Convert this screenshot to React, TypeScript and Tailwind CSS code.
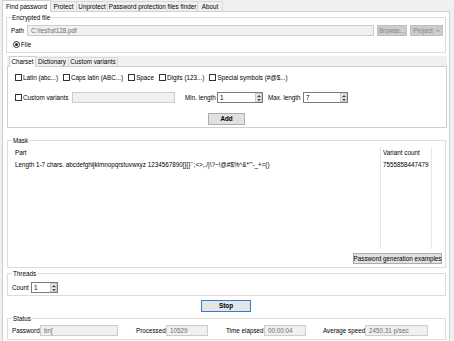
import React from "react";

function Tri({ down }: { down?: boolean }) {
  return (
    <svg width="4" height="2" viewBox="0 0 4 2">
      <polygon points={down ? "0,0 4,0 2,2" : "0,2 4,2 2,0"} fill="#404040" />
    </svg>
  );
}

function Spin({ value, w }: { value: string; w: string }) {
  return (
    <div className={`flex h-[11px] shrink-0 border border-[#7a7a7a] bg-white ${w}`}>
      <span className="flex-1 pl-[2px] leading-[9px]">{value}</span>
      <div className="flex w-[7px] flex-col border border-[#c9c9c9] bg-[#ececec]">
        <div className="flex flex-1 items-center justify-center border-b border-[#c9c9c9]">
          <Tri />
        </div>
        <div className="flex flex-1 items-center justify-center">
          <Tri down />
        </div>
      </div>
    </div>
  );
}

function Field({ value, w }: { value?: string; w: string }) {
  return (
    <div className={`relative h-[11px] shrink-0 border border-[#cccccc] bg-[#f0f0f0] pl-[3px] leading-[9px] text-[#6d6d6d] ${w}`}>
      {value}
    </div>
  );
}

function Check({ label }: { label: string }) {
  return (
    <div className="flex shrink-0 items-center gap-[1px]">
      <span className="h-[7px] w-[7px] border border-[#333333] bg-white" />
      <span className="leading-[9px]">{label}</span>
    </div>
  );
}

function Label({ text, w, className }: { text: string; w: string; className?: string }) {
  return (
    <span className={`flex shrink-0 justify-start leading-[9px] ${w} ${className ?? ""}`}>
      <span>{text}</span>
    </span>
  );
}

function Group({ legend, className, children }: { legend: string; className?: string; children: React.ReactNode }) {
  return (
    <fieldset className={`border border-[#dcdcdc] ${className ?? ""}`}>
      <legend className="ml-[4px] px-[1px] leading-[9px]">{legend}</legend>
      {children}
    </fieldset>
  );
}

function Btn({ children, w, className }: { children: React.ReactNode; w: string; className?: string }) {
  return (
    <div className={`flex shrink-0 items-center justify-center border ${w} ${className ?? ""}`}>{children}</div>
  );
}

export default function App() {
  return (
    <div className="h-[341px] w-[454px] overflow-hidden whitespace-nowrap bg-[#f0f0f0] font-['Liberation_Sans',Arial,sans-serif] text-[6.3px] text-[#000000]">
      {/* top tabs */}
      <div className="flex h-[11px] items-end pl-[2px]">
        <div className="relative z-10 -mb-[1px] flex h-[12px] w-[49px] items-center justify-center border border-b-0 border-[#cfcfcf] bg-white">
          Find password
        </div>
        <div className="flex h-[10px] w-[26px] items-center justify-center border border-b-0 border-l-0 border-[#d9d9d9] bg-[#f0f0f0]">
          Protect
        </div>
        <div className="flex h-[10px] w-[31px] items-center justify-center border border-b-0 border-l-0 border-[#d9d9d9] bg-[#f0f0f0]">
          Unprotect
        </div>
        <div className="flex h-[10px] w-[90px] items-center justify-center border border-b-0 border-l-0 border-[#d9d9d9] bg-[#f0f0f0]">
          Password protection files finder
        </div>
        <div className="flex h-[10px] w-[25px] items-center justify-center border border-b-0 border-l-0 border-[#d9d9d9] bg-[#f0f0f0]">
          About
        </div>
      </div>

      {/* tab page */}
      <div className="ml-[2px] flex h-[340px] w-[448px] flex-col border border-[#cfcfcf] bg-white">
        {/* Encrypted file */}
        <Group legend="Encrypted file" className="mt-[1px] ml-[3px] mr-[3px]">
          <div className="mt-[3px] flex items-center pl-[4px] pr-[2px]">
            <Label text="Path" w="w-[16px]" />
            <Field value="C:\test\st128.pdf" w="flex-1" />
            <Btn w="ml-[3px] h-[11px] w-[30px]" className="border-[#bfbfbf] bg-[#cccccc] text-[#838383]">
              Browse...
            </Btn>
            <Btn w="ml-[3px] h-[11px] w-[33px]" className="gap-[3px] border-[#bfbfbf] bg-[#cccccc] text-[#838383]">
              <span>Project</span>
              <svg width="4" height="2" viewBox="0 0 4 2">
                <polygon points="0,0 4,0 2,2" fill="#9a9a9a" />
              </svg>
            </Btn>
          </div>
          <div className="mt-[4px] mb-[3px] flex h-[9px] items-center gap-[1px] pl-[6px]">
            <span className="flex h-[7px] w-[7px] items-center justify-center rounded-full border border-[#333333] bg-white">
              <span className="h-[3px] w-[3px] rounded-full bg-[#222222]" />
            </span>
            <span className="leading-[9px]">File</span>
          </div>
        </Group>

        {/* sub tabs */}
        <div className="mt-[3px] ml-[4px] mr-[2px] flex flex-col">
          <div className="flex h-[10px] items-end bg-[#f0f0f0] pl-[2px]">
            <div className="relative z-10 -mb-[1px] flex h-[11px] w-[27px] items-center justify-center border border-b-0 border-[#cfcfcf] bg-white">
              Charset
            </div>
            <div className="flex h-[9px] w-[33px] items-center justify-center border border-b-0 border-l-0 border-[#d9d9d9] bg-[#f0f0f0]">
              Dictionary
            </div>
            <div className="flex h-[9px] w-[49px] items-center justify-center border border-b-0 border-l-0 border-[#d9d9d9] bg-[#f0f0f0]">
              Custom variants
            </div>
          </div>
          <div className="flex flex-col border border-[#cfcfcf] bg-white pb-[2px] pt-[6px]">
            <div className="flex h-[9px] items-center gap-[5px] pl-[7px]">
              <Check label="Latin (abc...)" />
              <Check label="Caps latin (ABC...)" />
              <Check label="Space" />
              <Check label="Digits (123...)" />
              <Check label="Special symbols (#@$...)" />
            </div>
            <div className="mt-[10px] flex h-[11px] items-center pl-[7px]">
              <div className="w-[57px] shrink-0">
                <Check label="Custom variants" />
              </div>
              <Field w="w-[103px]" />
              <Label text="Min. length" w="ml-[10px] w-[32px]" />
              <Spin value="1" w="w-[46px]" />
              <Label text="Max. length" w="ml-[5px] w-[35px]" />
              <Spin value="7" w="w-[45px]" />
            </div>
            <div className="mt-[10px] flex justify-center pr-[1px]">
              <Btn w="h-[12px] w-[37px]" className="border-[#adadad] bg-[#e1e1e1] font-semibold">
                Add
              </Btn>
            </div>
          </div>
        </div>

        {/* Mask */}
        <Group legend="Mask" className="mt-[8px] ml-[4px] mr-[3px]">
          <div className="mx-[3px] flex h-[104px] bg-white">
            <div className="min-w-0 flex-1 pl-[4px] pt-[3px]">
              <div className="leading-[9px]">Part</div>
              <div className="mt-[3px] leading-[9px]">
                {"Length 1-7 chars. abcdefghijklmnopqrstuvwxyz 1234567890[]{}'`;<>,./|\\?~!@#$%^&*'\"-_+=()"}
              </div>
            </div>
            <div className="mt-[2px] w-[52px] shrink-0 border-x border-[#e6e6e6] pl-[2px] pt-[1px]">
              <div className="leading-[9px]">Variant count</div>
              <div className="mt-[3px] leading-[9px]">7555858447479</div>
            </div>
            <div className="w-[10px] shrink-0" />
          </div>
          <div className="mt-[4px] mb-[3px] flex justify-end pr-[3px]">
            <Btn w="h-[11px] w-[89px]" className="border-[#adadad] bg-[#e1e1e1]">
              Password generation examples
            </Btn>
          </div>
        </Group>

        {/* Threads */}
        <Group legend="Threads" className="mt-[1px] ml-[4px] mr-[3px]">
          <div className="mt-[4px] mb-[2px] flex items-center pl-[4px]">
            <Label text="Count" w="w-[19px]" />
            <Spin value="1" w="w-[27px]" />
          </div>
        </Group>

        {/* Stop */}
        <div className="mt-[4px] flex justify-center">
          <Btn w="h-[12px] w-[50px]" className="border-[#2f7fd0] bg-[#e5e5e5] font-semibold">
            Stop
          </Btn>
        </div>

        {/* Status */}
        <Group legend="Status" className="mt-[2px] ml-[4px] mr-[3px]">
          <div className="mt-[2px] mb-[3px] flex items-center pl-[4px]">
            <Label text="Password" w="w-[28px]" />
            <Field value="bn[" w="w-[78px]" />
            <Label text="Processed" w="ml-[18px] w-[30px]" />
            <Field value="10529" w="w-[42px]" />
            <Label text="Time elapsed" w="ml-[18px] w-[38px]" />
            <Field value="00:00:04" w="w-[42px]" />
            <Label text="Average speed" w="ml-[17px] w-[42px]" />
            <Field value="2450,31 p/sec" w="w-[63px]" />
          </div>
        </Group>
      </div>
    </div>
  );
}
